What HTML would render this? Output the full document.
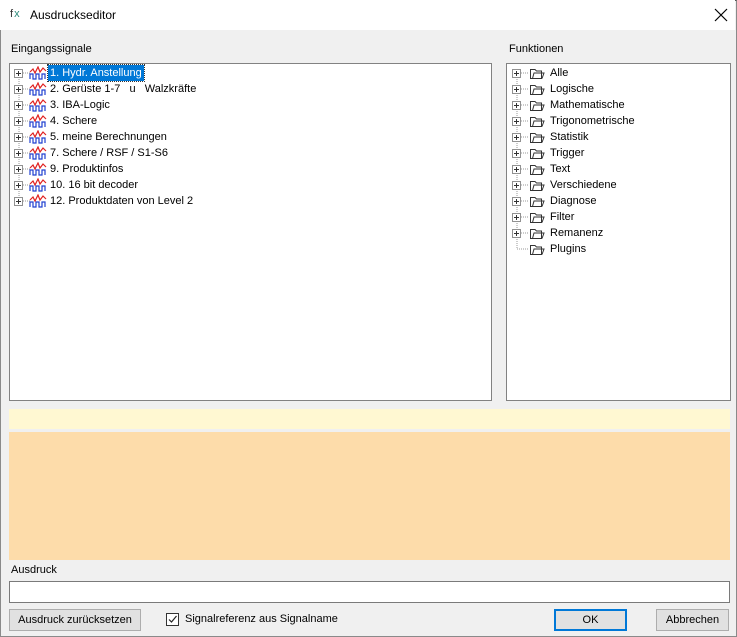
<!DOCTYPE html>
<html><head><meta charset="utf-8"><style>
*{box-sizing:border-box;margin:0;padding:0}
body{width:737px;height:637px;background:#f0f0f0;font-family:"Liberation Sans",sans-serif;font-size:11px;color:#000;position:relative;overflow:hidden}
.win{position:absolute;left:0;top:0;width:737px;height:637px;border:1px solid #8a8a8a;border-top:1px solid #555}
.title{position:absolute;left:0;top:0;width:735px;height:30px;background:#fff}
.abs{position:absolute}
.tree{position:absolute;background:#fff;border:1px solid #828282}
.row{position:absolute;height:16px;line-height:16px;white-space:nowrap}
.pl{position:absolute;width:9px;height:9px;border:1px solid #919191;background:#fff;top:4px}
.pl:before{content:"";position:absolute;left:1px;top:3px;width:5px;height:1px;background:#333}
.pl:after{content:"";position:absolute;left:3px;top:1px;width:1px;height:5px;background:#333}
.btn{position:absolute;height:22px;background:#e1e1e1;border:1px solid #adadad;text-align:center;line-height:20px}
</style></head><body>
<div class="win"></div>
<div class="title"></div>
<div class="abs" style="left:10px;top:8px;font-size:11px;color:#333;letter-spacing:1px">f<span style="color:#2a8a7a">x</span></div>
<div class="abs" style="left:30px;top:8px;font-size:12px">Ausdruckseditor</div>
<svg class="abs" style="left:714px;top:8px" width="14" height="14"><path d="M1 1L13 13M13 1L1 13" stroke="#000" stroke-width="1.2"/></svg>
<div class="abs" style="left:11px;top:43px">Eingangssignale</div>
<div class="abs" style="left:509px;top:43px">Funktionen</div>

<div class="tree" style="left:9px;top:63px;width:483px;height:338px">
<svg class="abs" style="left:0;top:0" width="60" height="150"><path d="M9 9V135" stroke="#999" stroke-dasharray="1 1"/>
<g stroke="#999" stroke-dasharray="1 1"><path d="M13 9H20M13 25H20M13 41H20M13 57H20M13 73H20M13 89H20M13 105H20M13 121H20M13 137H20"/></g></svg>
<div id="lt"></div>
</div>
<div class="tree" style="left:506px;top:63px;width:225px;height:338px">
<svg class="abs" style="left:0;top:0" width="40" height="200"><path d="M10 9V184" stroke="#999" stroke-dasharray="1 1"/>
<g stroke="#999" stroke-dasharray="1 1"><path d="M14 9H22M14 25H22M14 41H22M14 57H22M14 73H22M14 89H22M14 105H22M14 121H22M14 137H22M14 153H22M14 169H22M10 185H22"/></g></svg>
<div id="rt"></div>
</div>

<div class="abs" style="left:9px;top:409px;width:721px;height:20px;background:#fff8d2"></div>
<div class="abs" style="left:9px;top:432px;width:721px;height:128px;background:#fddcaa"></div>
<div class="abs" style="left:11px;top:564px">Ausdruck</div>
<div class="abs" style="left:9px;top:581px;width:721px;height:22px;background:#fff;border:1px solid #7a7a7a"></div>
<div class="btn" style="left:9px;top:609px;width:132px">Ausdruck zurücksetzen</div>
<div class="abs" style="left:166px;top:613px;width:13px;height:13px;border:1px solid #333;background:#fff"><svg width="11" height="11" style="position:absolute;left:0;top:0"><path d="M2 5.5L4.5 8L9.5 2" stroke="#222" fill="none" stroke-width="1.2"/></svg></div>
<div class="abs" style="left:185px;top:613px">Signalreferenz aus Signalname</div>
<div class="btn" style="left:554px;top:609px;width:73px;border:2px solid #0078d7;line-height:18px">OK</div>
<div class="btn" style="left:656px;top:609px;width:73px">Abbrechen</div>

<script>
var sig='<svg width="18" height="14" style="position:absolute;left:0;top:1px"><path d="M1 6L4 3L6 7L9 1L11 6L14 2L17 5" stroke="#e02020" fill="none" stroke-width="1.2"/><path d="M1 13V8H4V13H7V8H10V13H13V8H16V13" stroke="#2040d0" fill="none" stroke-width="1.2"/></svg>';
var L=["1. Hydr. Anstellung","2. Gerüste 1-7&nbsp;&nbsp;&nbsp;u&nbsp;&nbsp;&nbsp;Walzkräfte","3. IBA-Logic","4. Schere","5. meine Berechnungen","7. Schere / RSF / S1-S6","9. Produktinfos","10. 16 bit decoder","12. Produktdaten von Level 2"];
var h='';L.forEach(function(t,i){var y=1+i*16;h+='<div class="pl" style="left:4px;top:'+(y+4)+'px"></div><div class="row" style="left:19px;top:'+y+'px">'+sig+'<span style="position:absolute;left:19px;padding:0 2px;'+(i==0?'background:#0078d7;color:#fff;outline:1px dotted #333':'')+'">'+t+'</span></div>';});
document.getElementById('lt').innerHTML=h;
var R=["Alle","Logische","Mathematische","Trigonometrische","Statistik","Trigger","Text","Verschiedene","Diagnose","Filter","Remanenz","Plugins"];
var fo='<svg width="16" height="14" style="position:absolute;left:0;top:1px"><path d="M1.5 3.5H6L7.5 5H12.5V12.5H1.5Z M3.5 12.5L5 7H15L13 12.5" stroke="#333" fill="#fff" stroke-width="1"/></svg>';
h='';R.forEach(function(t,i){var y=1+i*16;if(i<11)h+='<div class="pl" style="left:5px;top:'+(y+4)+'px"></div>';h+='<div class="row" style="left:22px;top:'+y+'px">'+fo+'<span style="position:absolute;left:21px">'+t+'</span></div>';});
document.getElementById('rt').innerHTML=h;
</script>
</body></html>
